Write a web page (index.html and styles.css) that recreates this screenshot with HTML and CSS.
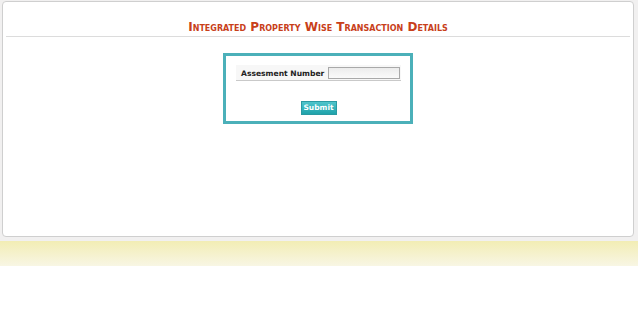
FILE: index.html
```html
<!DOCTYPE html>
<html>
<head>
<meta charset="utf-8">
<link rel="stylesheet" href="styles.css">
</head>
<body>
<div class="wrap">
  <div class="panel">
    <h1 class="title">Integrated Property Wise Transaction Details</h1>
    <div class="rule"></div>
    <div class="formbox">
      <div class="row">
        <label class="lbl" for="asn">Assesment Number</label>
        <input class="inp" id="asn" type="text">
      </div>
      <div class="actions">
        <button class="btn" type="button">Submit</button>
      </div>
    </div>
  </div>
</div>
<div class="band"></div>
</body>
</html>
```
FILE: styles.css
```css
html, body { margin: 0; padding: 0; background: #fff; }
body { font-family: "DejaVu Sans", Verdana, sans-serif; }
.wrap {
  background: #f1f0f0;
  padding: 1px 4px 4px 2px;
}
.panel {
  background: #fff;
  border: 1px solid #cfcfcf;
  border-radius: 4px;
  height: 234px;
  box-sizing: content-box;
  padding: 0 3px;
}
.title {
  margin: 0;
  padding-top: 17px;
  height: 16px;
  text-align: center;
  font-size: 12px;
  font-weight: bold;
  font-variant: small-caps;
  color: #c8401a;
  line-height: 16px;
  letter-spacing: 0;
}
.rule {
  margin-top: 1px;
  border-top: 1px solid #dcdcdc;
}
.formbox {
  width: 165px;
  margin: 16px auto 0;
  border: 3px solid #4bb0b9;
  padding: 9px 9px 6px 10px;
  box-sizing: content-box;
}
.row {
  display: flex;
  align-items: center;
  gap: 4px;
  padding: 2px 1px 1px 5px;
  background: #f7f7f7;
  border-bottom: 1px solid #c9c9c9;
}
.lbl {
  font-size: 7.6px;
  font-weight: bold;
  color: #222;
  white-space: nowrap;
}
.inp {
  width: 72px;
  height: 12px;
  box-sizing: border-box;
  border: 1px solid #a9a9a9;
  background: linear-gradient(#ececec, #fafafa);
  padding: 0;
  margin: 0;
}
.actions {
  display: flex;
  justify-content: center;
  margin-top: 20px;
}
.btn {
  width: 36px;
  height: 14px;
  padding: 0;
  border: 1px solid #2a9aa2;
  background: linear-gradient(#4fc4cb, #1fa3ab);
  color: #fff;
  font-family: "DejaVu Sans", Verdana, sans-serif;
  font-size: 7.5px;
  font-weight: bold;
  line-height: 12px;
}
.band {
  height: 25px;
  background: linear-gradient(#f2edb4, #f8f6e4);
}
```
